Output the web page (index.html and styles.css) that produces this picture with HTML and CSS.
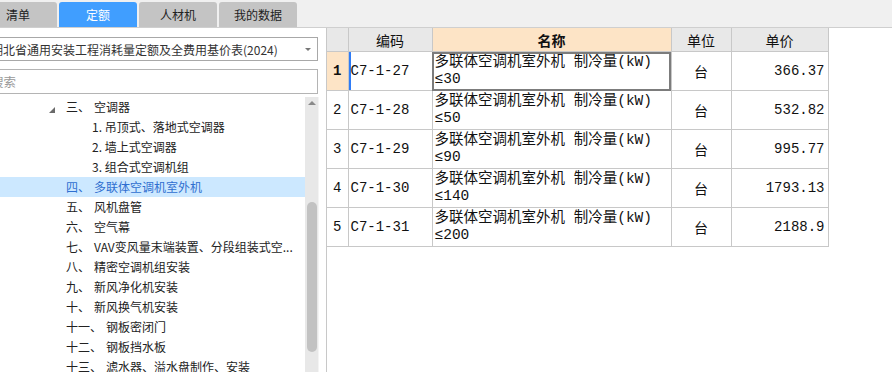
FILE: index.html
```html
<!DOCTYPE html>
<html lang="zh-CN">
<head>
    <meta charset="UTF-8">
    <meta name="viewport" content="width=device-width, initial-scale=1.0">
    <title>定额库</title>
    <link rel="stylesheet" href="styles.css">
</head>
<body>
    <div class="tabs">
        <div class="tab">清单</div>
        <div class="tab active">定额</div>
        <div class="tab">人材机</div>
        <div class="tab">我的数据</div>
    </div>

    <div class="main">
        <div class="side">
            <div class="side-inner">
                <div class="select">
                    <span>湖北省通用安装工程消耗量定额及全费用基价表(2024)</span>
                    <span class="caret"></span>
                </div>
                <input class="search" type="text" placeholder="搜索">

                <div class="tree-wrap">
                    <ul class="tree">
                        <li class="open"><span class="arrow"></span><span class="num">三、</span>空调器</li>
                        <li class="sub">1. 吊顶式、落地式空调器</li>
                        <li class="sub">2. 墙上式空调器</li>
                        <li class="sub">3. 组合式空调机组</li>
                        <li class="selected"><span class="num">四、</span>多联体空调机室外机</li>
                        <li><span class="num">五、</span>风机盘管</li>
                        <li><span class="num">六、</span>空气幕</li>
                        <li><span class="num">七、</span>VAV变风量末端装置、分段组装式空...</li>
                        <li><span class="num">八、</span>精密空调机组安装</li>
                        <li><span class="num">九、</span>新风净化机安装</li>
                        <li><span class="num">十、</span>新风换气机安装</li>
                        <li><span class="num">十一、</span>钢板密闭门</li>
                        <li><span class="num">十二、</span>钢板挡水板</li>
                        <li><span class="num">十三、</span>滤水器、溢水盘制作、安装</li>
                    </ul>
                    <div class="vscroll">
                        <div class="up"></div>
                        <div class="thumb"></div>
                    </div>
                </div>
            </div>
        </div>

        <div class="grid">
            <table id="dataTable">
                <colgroup>
                    <col style="width: 21px">
                    <col style="width: 84px">
                    <col style="width: 239px">
                    <col style="width: 60px">
                    <col style="width: 97px">
                </colgroup>
                <thead>
                    <tr>
                        <th></th>
                        <th>编码</th>
                        <th class="sorted">名称</th>
                        <th>单位</th>
                        <th>单价</th>
                    </tr>
                </thead>
                <tbody>
                    <tr class="current">
                        <td class="idx">1</td>
                        <td class="code">C7-1-27</td>
                        <td class="name">多联体空调机室外机 制冷量(kW)<br>≤30</td>
                        <td class="unit">台</td>
                        <td class="price">366.37</td>
                    </tr>
                    <tr>
                        <td class="idx">2</td>
                        <td class="code">C7-1-28</td>
                        <td class="name">多联体空调机室外机 制冷量(kW)<br>≤50</td>
                        <td class="unit">台</td>
                        <td class="price">532.82</td>
                    </tr>
                    <tr>
                        <td class="idx">3</td>
                        <td class="code">C7-1-29</td>
                        <td class="name">多联体空调机室外机 制冷量(kW)<br>≤90</td>
                        <td class="unit">台</td>
                        <td class="price">995.77</td>
                    </tr>
                    <tr>
                        <td class="idx">4</td>
                        <td class="code">C7-1-30</td>
                        <td class="name">多联体空调机室外机 制冷量(kW)<br>≤140</td>
                        <td class="unit">台</td>
                        <td class="price">1793.13</td>
                    </tr>
                    <tr>
                        <td class="idx">5</td>
                        <td class="code">C7-1-31</td>
                        <td class="name">多联体空调机室外机 制冷量(kW)<br>≤200</td>
                        <td class="unit">台</td>
                        <td class="price">2188.9</td>
                    </tr>
                </tbody>
            </table>
        </div>
    </div>
</body>
</html>
```

FILE: styles.css
```css
body {
    margin: 0;
    background: #f0f0f0;
    font-family: "Noto Sans CJK SC", "Noto Sans", sans-serif;
    font-size: 12px;
    color: #222;
    overflow: hidden;
}

/* tabs */
.tabs {
    display: flex;
    gap: 2px;
    height: 25px;
    padding-top: 2px;
    margin-left: -21px;
}

.tab {
    width: 78px;
    height: 25px;
    line-height: 25px;
    text-align: center;
    background: #c4c4c4;
    border-radius: 3px 3px 0 0;
    color: #222;
}

.tab.active {
    background: #409eff;
    color: #fff;
}

/* main area */
.main {
    display: flex;
    height: 344px;
    border-top: 1px solid #cfcfcf;
}

.side {
    width: 326px;
    flex-shrink: 0;
    background: #fff;
    overflow: hidden;
}

.side-inner {
    margin-left: -16px;
    width: 342px;
}

.select {
    display: flex;
    align-items: center;
    justify-content: space-between;
    box-sizing: border-box;
    width: 334px;
    height: 24px;
    margin-top: 9px;
    padding: 0 6px 0 6px;
    border: 1px solid #a8a8a8;
    font-size: 12px;
    color: #333;
    white-space: nowrap;
}

.caret {
    width: 0;
    height: 0;
    border-left: 3px solid transparent;
    border-right: 3px solid transparent;
    border-top: 3px solid #777;
}

.search {
    display: block;
    box-sizing: border-box;
    width: 334px;
    height: 25px;
    margin: 8px 0 0 0;
    padding: 0 6px;
    border: 1px solid #b4b4b4;
    font-family: inherit;
    font-size: 12.5px;
    outline: none;
}

.search::placeholder {
    color: #999;
}

/* tree */
.tree-wrap {
    display: flex;
    height: 275px;
    margin-top: 3px;
}

.tree {
    list-style: none;
    margin: 0;
    padding: 0;
    width: 321px;
    overflow: hidden;
}

.tree li {
    height: 20px;
    line-height: 20px;
    padding-left: 82px;
    white-space: nowrap;
    overflow: hidden;
}

.tree li.open {
    padding-left: 65px;
}

.tree li.sub {
    padding-left: 108px;
}

.tree li.selected {
    background: #cce8ff;
    color: #2f6fd0;
}

.arrow {
    display: inline-block;
    width: 0;
    height: 0;
    margin-right: 11px;
    vertical-align: -1px;
    border-style: solid;
    border-width: 0 0 6px 6px;
    border-color: transparent transparent #6a6a6a transparent;
}

.num {
    margin-right: 4px;
}

.vscroll {
    width: 13px;
    flex-shrink: 0;
    background: #e8e8e8;
    border-right: 1px solid #f4f4f4;
}

.up {
    width: 0;
    height: 0;
    margin: 4px auto 0;
    border-left: 4px solid transparent;
    border-right: 4px solid transparent;
    border-bottom: 4px solid #8a8a8a;
}

.thumb {
    width: 10px;
    height: 150px;
    margin: 97px 0 0 2px;
    background: #c2c2c2;
    border-radius: 5px;
}

/* data grid */
.grid {
    flex: 1;
    background: #fff;
    border-left: 1px solid #c8c8c8;
}

table {
    table-layout: fixed;
    width: 501px;
    border-collapse: collapse;
    font-family: "Liberation Mono", "Noto Sans CJK SC", monospace;
    font-size: 14px;
    color: #111;
}

th, td {
    border: 1px solid #c8c8c8;
    padding: 0 2px;
    overflow: hidden;
    white-space: nowrap;
}

th:first-child, td:first-child {
    border-left: none;
}

th {
    height: 23px;
    border-top: none;
    background: #e8e8e8;
    font-family: "Noto Sans CJK SC", sans-serif;
    font-weight: normal;
    font-size: 14px;
    line-height: 22px;
}

th.sorted {
    background: #fde4c6;
    font-weight: bold;
}

tbody tr {
    height: 39px;
}

td.idx {
    text-align: center;
    padding: 0;
}

td.name {
    font-size: 14.5px;
    line-height: 17px;
}

td.unit {
    text-align: center;
    font-family: "Noto Sans CJK SC", sans-serif;
}

td.price {
    text-align: right;
    padding-right: 3px;
}

tr.current td.idx {
    background: #fde4c6;
    font-weight: bold;
}

tr.current td.code {
    box-shadow: inset 2px 0 0 #2f7cf6;
}

tr.current td.name {
    outline: 2px solid #7c7c7c;
    outline-offset: -2px;
}
```
